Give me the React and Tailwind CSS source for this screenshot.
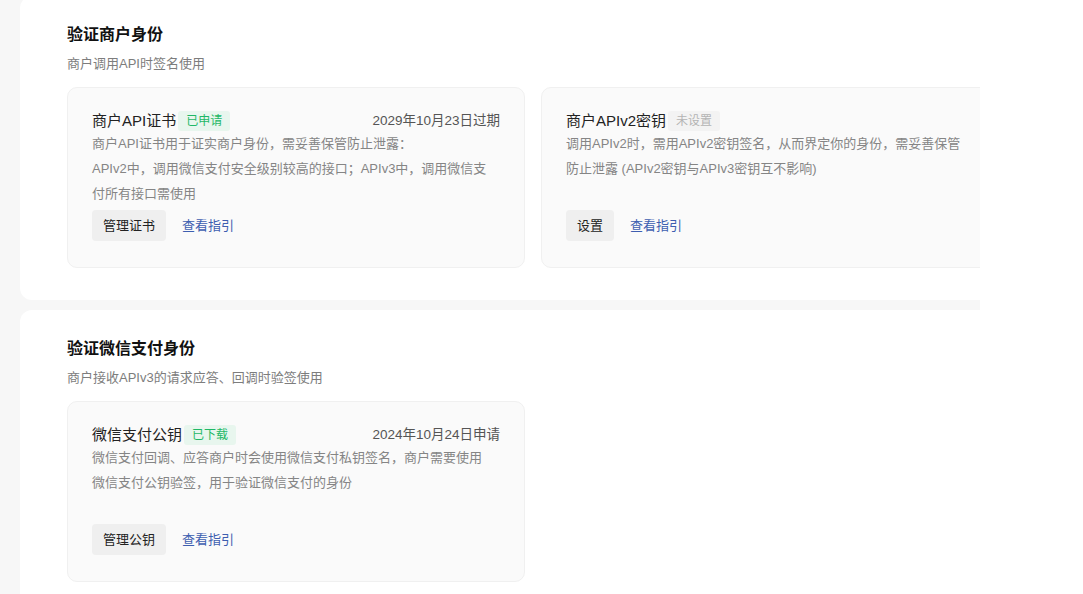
import React from "react";

const font = { fontFamily: '"Liberation Sans", "Noto Sans CJK SC", sans-serif' };

function Tag({ tone, children }) {
  const cls =
    tone === "green"
      ? "bg-[#e8f6ee] text-[#1fb866]"
      : "bg-[#f3f3f3] text-[#b4b4b4]";
  return (
    <span className={`ml-[2px] inline-flex h-5 items-center rounded-[3px] px-2 text-[12px] leading-5 ${cls}`}>
      {children}
    </span>
  );
}

function KeyCard({ title, tag, tone, date, desc, action }) {
  return (
    <div className="flex min-h-[181px] w-[458px] shrink-0 flex-col rounded-[10px] border border-[#f0f0f0] bg-[#fafafa] px-6 pb-[26px] pt-[23px]">
      <div className="flex h-5 items-center">
        <span className="text-[15px] leading-5 text-[#222]">{title}</span>
        <Tag tone={tone}>{tag}</Tag>
        {date && <span className="ml-auto text-[13.5px] leading-5 text-[#555]">{date}</span>}
      </div>
      <p className="text-[13px] leading-[25px] text-[#858585]">{desc}</p>
      <div className="mt-auto flex items-center gap-4 pt-1">
        <button className="h-[31px] rounded-[4px] bg-[#efefef] px-[11px] text-[13px] text-[#222]">{action}</button>
        <a className="text-[13px] text-[#3d5eb0]">查看指引</a>
      </div>
    </div>
  );
}

function Panel({ title, sub, children, className = "" }) {
  return (
    <section className={`ml-5 w-[1100px] rounded-xl bg-white pb-8 pl-[47px] pt-[27px] ${className}`}>
      <h2 className="text-[16px] font-bold leading-6 text-[#111]">{title}</h2>
      <p className="mt-[7px] text-[13px] leading-5 text-[#7d7d7d]">{sub}</p>
      <div className="mt-[13px] flex gap-4">{children}</div>
    </section>
  );
}

export default function App() {
  return (
    <div className="h-screen w-full overflow-hidden bg-white" style={font}>
      <div className="h-full w-[980px] overflow-hidden bg-[#f7f7f7]">
        <Panel className="-mt-1" title="验证商户身份" sub="商户调用API时签名使用">
          <KeyCard
            title="商户API证书"
            tag="已申请"
            tone="green"
            date="2029年10月23日过期"
            desc={
              <>
                商户API证书用于证实商户身份，需妥善保管防止泄露：
                <br />
                APIv2中，调用微信支付安全级别较高的接口；APIv3中，调用微信支
                <br />
                付所有接口需使用
              </>
            }
            action="管理证书"
          />
          <KeyCard
            title="商户APIv2密钥"
            tag="未设置"
            tone="gray"
            desc={
              <>
                调用APIv2时，需用APIv2密钥签名，从而界定你的身份，需妥善保管
                <br />
                防止泄露 (APIv2密钥与APIv3密钥互不影响)
              </>
            }
            action="设置"
          />
        </Panel>
        <Panel className="mt-[10px]" title="验证微信支付身份" sub="商户接收APIv3的请求应答、回调时验签使用">
          <KeyCard
            title="微信支付公钥"
            tag="已下载"
            tone="green"
            date="2024年10月24日申请"
            desc={
              <>
                微信支付回调、应答商户时会使用微信支付私钥签名，商户需要使用
                <br />
                微信支付公钥验签，用于验证微信支付的身份
              </>
            }
            action="管理公钥"
          />
        </Panel>
      </div>
    </div>
  );
}
